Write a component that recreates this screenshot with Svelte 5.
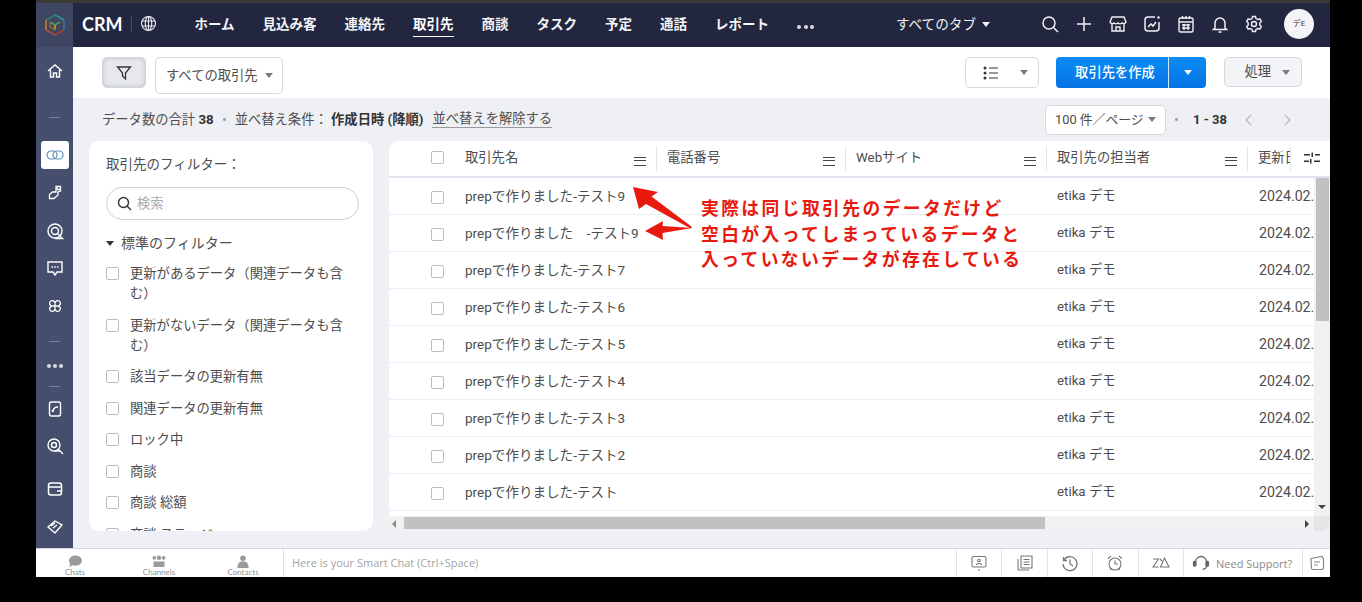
<script>
  const nav = ['ホーム', '見込み客', '連絡先', '取引先', '商談', 'タスク', '予定', '通話', 'レポート']
  const filters = [
    '更新があるデータ（関連データも含む）',
    '更新がないデータ（関連データも含む）',
    '該当データの更新有無',
    '関連データの更新有無',
    'ロック中',
    '商談',
    '商談 総額',
    '商談 ステージ'
  ]
  const rows = [
    'prepで作りました-テスト9',
    'prepで作りました　-テスト9',
    'prepで作りました-テスト7',
    'prepで作りました-テスト6',
    'prepで作りました-テスト5',
    'prepで作りました-テスト4',
    'prepで作りました-テスト3',
    'prepで作りました-テスト2',
    'prepで作りました-テスト'
  ]
</script>

<div class="app">
  <header class="top">
    <div class="logo">
      <svg width="24" height="24" viewBox="0 0 24 24" fill="none" stroke-width="1.6">
        <path d="M12 2 21 7" stroke="#3d8f8a" />
        <path d="M12 2 3 7" stroke="#2f7f6a" />
        <path d="M3 7v10" stroke="#b8862c" />
        <path d="M3 17l9 5" stroke="#b5483c" />
        <path d="M12 22l9-5" stroke="#a33c3c" />
        <path d="M21 17V7" stroke="#3b6fb0" />
        <path d="M7 9l5 3 5-3" stroke="#4b9a58" />
        <path d="M12 12v5" stroke="#c9a22e" />
        <path d="M7 9v5l5 3" stroke="#8c6a2a" />
      </svg>
    </div>
    <div class="brand">CRM</div>
    <span class="brand-sep"></span>
    <svg class="globe" width="17" height="17" viewBox="0 0 17 17" fill="none" stroke="#e8e9ee" stroke-width="1.1">
      <circle cx="8.5" cy="8.5" r="7" />
      <ellipse cx="8.5" cy="8.5" rx="3.2" ry="7" />
      <path d="M8.5 1.5v14M2 6h13M2 11h13" />
    </svg>
    <nav class="nav">
      {#each nav as item}
        <span class="nav-item" class:current={item === '取引先'}>{item}</span>
      {/each}
      <span class="nav-more"><i></i><i></i><i></i></span>
    </nav>
    <div class="top-right">
      <span class="tabs">すべてのタブ<i class="caret light"></i></span>
      <div class="top-icons">
        <svg viewBox="0 0 20 20" fill="none" stroke="#f0f1f5" stroke-width="1.5"><circle cx="9" cy="9" r="6" /><path d="M13.5 13.5 18 18" /></svg>
        <svg viewBox="0 0 20 20" fill="none" stroke="#f0f1f5" stroke-width="1.5"><path d="M10 3v14M3 10h14" /></svg>
        <svg viewBox="0 0 20 20" fill="none" stroke="#f0f1f5" stroke-width="1.4"><path d="M4 3h12l2 5a2.5 2.5 0 0 1-4 1 3 3 0 0 1-4 0 3 3 0 0 1-4 0 2.5 2.5 0 0 1-4-1zM4 10v7h12v-7M8 17v-4h4v4" /></svg>
        <svg viewBox="0 0 20 20" fill="none" stroke="#f0f1f5" stroke-width="1.5"><path d="M13 3H6a3 3 0 0 0-3 3v8a3 3 0 0 0 3 3h8a3 3 0 0 0 3-3V8" /><path d="M6 13l3-3 2 2 3-4" /><circle cx="16.5" cy="3.5" r="1.2" fill="#f0f1f5" stroke="none" /></svg>
        <svg viewBox="0 0 20 20" fill="none" stroke="#f0f1f5" stroke-width="1.4"><rect x="3" y="4" width="14" height="14" rx="1.5" /><path d="M3 8h14M6.5 2v3M10 2v3M13.5 2v3M6 11h8M6 14h8M8 10v6M12 10v6" /></svg>
        <svg viewBox="0 0 20 20" fill="none" stroke="#f0f1f5" stroke-width="1.5"><path d="M5 14V9a5 5 0 0 1 10 0v5l1.5 1.5h-13zM8.5 18h3" /></svg>
        <svg viewBox="0 0 20 20" fill="none" stroke="#f0f1f5" stroke-width="1.4"><path d="M8.5 2.5h3l.5 2 1.800 1 2-.6 1.500 2.600-1.500 1.500v2l1.500 1.500-1.500 2.600-2-.6-1.800 1-.5 2h-3l-.5-2-1.800-1-2 .6-1.500-2.600 1.500-1.500v-2L2.700 7.500l1.500-2.600 2 .6 1.800-1z" /><circle cx="10" cy="10" r="2.500" /></svg>
      </div>
      <span class="avatar">デE</span>
    </div>
  </header>

  <div class="middle">
    <aside class="rail">
      <svg class="r-home" viewBox="0 0 18 18" fill="none" stroke="#fff" stroke-width="1.4"><path d="M2 9l7-6 7 6M4.500 8v7h3v-4h3v4h3V8" /></svg>
      <span class="dash d1"></span>
      <span class="rail-active">
        <svg width="18" height="12" viewBox="0 0 18 12" fill="none" stroke="#5a8fc0" stroke-width="1.200"><rect x="1" y="2" width="10" height="8" rx="4" /><rect x="7" y="2" width="10" height="8" rx="4" /></svg>
      </span>
      <svg class="r-icon" viewBox="0 0 18 18" fill="none" stroke="#fff" stroke-width="1.300"><path d="M10 2.500h4.500v4.500l-2.500 1v3l-4 3.500H3.500v-4l3-2.500h3.500z" /><path d="M11 2.500v3h3.500" /></svg>
      <svg class="r-icon" viewBox="0 0 18 18" fill="none" stroke="#fff" stroke-width="1.400"><circle cx="9" cy="9" r="7" /><circle cx="9" cy="9" r="3.500" /><path d="M11 11l5.500 5.500H9" /></svg>
      <svg class="r-icon" viewBox="0 0 18 18" fill="none" stroke="#fff" stroke-width="1.400"><path d="M2 3h14v10h-5l-2 3-2-3H2z" /><path d="M5.500 8h1.500M8.300 8h1.500M11 8h1.500" /></svg>
      <svg class="r-icon" viewBox="0 0 18 18" fill="none" stroke="#fff" stroke-width="1.300"><path d="M9 6.500a2.700 2.700 0 1 1 2.500 2.500 2.700 2.700 0 1 1-2.500 2.500 2.700 2.700 0 1 1-2.500-2.500A2.700 2.700 0 1 1 9 6.500z" /><path d="M9 6.500v5M6.500 9h5" /></svg>
      <span class="dash d2"></span>
      <span class="rail-dots"><i></i><i></i><i></i></span>
      <span class="dash d3"></span>
      <svg class="r-icon" viewBox="0 0 18 18" fill="none" stroke="#fff" stroke-width="1.400"><rect x="3.500" y="2" width="11" height="14" rx="2" /><path d="M7 12c0-3 2-5 5-5M7 12l-1-2" /></svg>
      <svg class="r-icon" viewBox="0 0 18 18" fill="none" stroke="#fff" stroke-width="1.400"><circle cx="8" cy="8" r="6" /><circle cx="8" cy="8" r="2.500" /><path d="M12.500 12.500 17 17M9 14h5" /></svg>
      <svg class="r-icon wallet" viewBox="0 0 18 18" fill="none" stroke="#fff" stroke-width="1.500"><rect x="2.500" y="3" width="13" height="12" rx="2.500" /><path d="M3 7h12M11 11h4" /></svg>
      <svg class="r-icon" viewBox="0 0 18 18" fill="none" stroke="#fff" stroke-width="1.400"><path d="M2 9l7-6 7 4-7 8zM5 8l4-3M7 10l4-3" /></svg>
    </aside>

    <main class="content">
      <div class="toolbar">
        <button class="filter-btn" aria-label="filter">
          <svg width="18" height="18" viewBox="0 0 18 18" fill="none" stroke="#333" stroke-width="1.300"><path d="M2.500 3h13L10.500 9v6l-3-3V9z" /></svg>
        </button>
        <span class="select view">すべての取引先<i class="caret"></i></span>
        <div class="toolbar-right">
          <span class="select listview">
            <svg width="16" height="14" viewBox="0 0 16 14" fill="#333"><circle cx="2" cy="2" r="1.500" /><circle cx="2" cy="7" r="1.500" /><circle cx="2" cy="12" r="1.500" /><path d="M6 1.500h9v1H6zM6 6.500h9v1H6zM6 11.500h9v1H6z" /></svg>
            <i class="caret"></i>
          </span>
          <div class="create">
            <span class="create-main">取引先を作成</span>
            <span class="create-side"><i class="caret light"></i></span>
          </div>
          <span class="action">処理<i class="caret"></i></span>
        </div>
      </div>

      <div class="summary">
        <span>データ数の合計 <b>38</b></span>
        <span class="dot"></span>
        <span>並べ替え条件： <b>作成日時 (降順)</b></span>
        <span class="clear">並べ替えを解除する</span>
        <div class="pager">
          <span class="select per-page">100 件／ページ<i class="caret"></i></span>
          <span class="dot"></span>
          <b class="range">1 - 38</b>
          <svg width="10" height="12" viewBox="0 0 10 12" fill="none" stroke="#b5b8c0" stroke-width="1.300"><path d="M7 1 2 6l5 5" /></svg>
          <svg width="10" height="12" viewBox="0 0 10 12" fill="none" stroke="#b5b8c0" stroke-width="1.300"><path d="M3 1l5 5-5 5" /></svg>
        </div>
      </div>

      <div class="panes">
        <section class="filter-card">
          <div class="filter-title">取引先のフィルター：</div>
          <div class="search">
            <svg width="15" height="15" viewBox="0 0 15 15" fill="none" stroke="#333" stroke-width="1.400"><circle cx="6.500" cy="6.500" r="5" /><path d="M10 10l4 4" /></svg>
            <span>検索</span>
          </div>
          <div class="filter-group"><i class="caret dark"></i>標準のフィルター</div>
          <ul class="filter-list">
            {#each filters as f}
              <li><span class="check"></span><span class="filter-label">{f}</span></li>
            {/each}
          </ul>
        </section>

        <section class="table-card">
          <div class="thead">
            <div class="th name"><span class="check"></span><span class="th-label">取引先名</span><i class="menu"></i></div>
            <div class="th phone"><span class="th-label">電話番号</span><i class="menu"></i></div>
            <div class="th web"><span class="th-label">Webサイト</span><i class="menu"></i></div>
            <div class="th owner"><span class="th-label">取引先の担当者</span><i class="menu"></i></div>
            <div class="th date"><span class="th-label">更新日時</span></div>
            <div class="th tune">
              <svg width="16" height="12" viewBox="0 0 16 12" fill="#333"><path d="M0 2h6v1.500H0zM11 2h5v1.500h-5zM7.500 .5h1.500v4.500H7.500zM0 8.500h5v1.500H0zM10 8.500h6V10h-6zM6 7h1.500v4.500H6z" /></svg>
            </div>
          </div>
          <div class="tbody">
            <div class="rows">
              {#each rows as r}
                <div class="tr">
                  <div class="td name"><span class="check"></span><span class="cell-name">{r}</span></div>
                  <div class="td phone"></div>
                  <div class="td web"></div>
                  <div class="td owner">etika デモ</div>
                  <div class="td date">2024.02.</div>
                </div>
              {/each}
            </div>
            <div class="vscroll">
              <span class="vthumb"></span>
              <i class="arrow-down"></i>
            </div>
          </div>
          <div class="hscroll">
            <i class="arrow-left"></i>
            <span class="hthumb"></span>
            <i class="arrow-right"></i>
            <span class="corner"></span>
          </div>
        </section>
      </div>
    </main>
  </div>

  <footer class="bottom">
    <div class="messenger">
      <div class="m-item">
        <svg width="16" height="14" viewBox="0 0 16 14" fill="#9a9a9a"><ellipse cx="8.500" cy="6" rx="7" ry="5.500" /><path d="M3 8 2 13l5-3z" /></svg>
        <span>Chats</span>
      </div>
      <div class="m-item">
        <svg width="18" height="14" viewBox="0 0 18 14" fill="#9a9a9a"><circle cx="4" cy="3" r="2" /><circle cx="14" cy="3" r="2" /><circle cx="9" cy="3" r="2.400" /><path d="M3 7h12v5a1 1 0 0 1-1 1H4a1 1 0 0 1-1-1z" /></svg>
        <span>Channels</span>
      </div>
      <div class="m-item">
        <svg width="14" height="14" viewBox="0 0 14 14" fill="#9a9a9a"><circle cx="7" cy="3.500" r="3" /><path d="M1 14c0-5 2-7 6-7s6 2 6 7z" /></svg>
        <span>Contacts</span>
      </div>
    </div>
    <div class="chat-input">Here is your Smart Chat (Ctrl+Space)</div>
    <div class="tool">
      <svg viewBox="0 0 18 18" fill="none" stroke="#777" stroke-width="1.100"><rect x="2" y="2.500" width="14" height="10.500" rx="1.500" /><circle cx="9" cy="6.500" r="1.300" /><path d="M6.500 11c0-2 5-2 5 0M8 16h2" /></svg>
    </div>
    <div class="tool">
      <svg viewBox="0 0 18 18" fill="none" stroke="#777" stroke-width="1.100"><path d="M5 2h11v12H5zM2 5v11h11M7.500 5.500h6M7.500 8h6M7.500 10.500h6" /></svg>
    </div>
    <div class="tool">
      <svg viewBox="0 0 18 18" fill="none" stroke="#777" stroke-width="1.300"><path d="M3 6a7 7 0 1 1-1 4M2.500 3v3.500H6M9 5.500V10l3 2" /></svg>
    </div>
    <div class="tool">
      <svg viewBox="0 0 18 18" fill="none" stroke="#777" stroke-width="1.100"><circle cx="9" cy="10" r="6" /><path d="M9 6.500V10h3M2 4.500 5 2M16 4.500 13 2M4 16l1-1.500M14 16l-1-1.500" /></svg>
    </div>
    <div class="tool">
      <svg viewBox="0 0 18 18" fill="none" stroke="#777" stroke-width="1.100"><path d="M1 5h5.500L1 13h5.500M8.500 13l4-9 4.500 9zM8 5l2 2" /></svg>
    </div>
    <div class="support">
      <svg width="18" height="18" viewBox="0 0 18 18" fill="none" stroke="#666" stroke-width="1.300"><path d="M3.500 8a5.500 5.500 0 0 1 11 0v4a3 3 0 0 1-4 3" /><rect x="1.500" y="7.500" width="2.500" height="4.500" rx="1" fill="#666" /><rect x="14" y="7.500" width="2.500" height="4.500" rx="1" fill="#666" /></svg>
      <span>Need Support?</span>
    </div>
    <div class="tool last">
      <svg viewBox="0 0 18 18" fill="none" stroke="#888" stroke-width="1.200"><path d="M3 4.500 14 2.500l1.500 2.500v9a1.500 1.500 0 0 1-1.500 1.500H5A1.500 1.500 0 0 1 3.500 14zM6 8h6M6 11h4" /></svg>
    </div>
  </footer>

  <svg class="arrows" width="80" height="60" viewBox="0 0 80 60" fill="#e8190f">
    <path d="M2 2 27 7 20.500 11.500 61 42 59.500 43.500 15 19 8 24z" />
    <path d="M14 46 32 36 31.500 41 61 43 31.500 48 32 55z" />
  </svg>
  <div class="note">
    実際は同じ取引先のデータだけど<br />
    空白が入ってしまっているデータと<br />
    入っていないデータが存在している
  </div>
</div>

<style>
  :global(body) {
    margin: 0;
    background: #000;
    overflow: hidden;
  }

  .app {
    position: relative;
    display: flex;
    flex-direction: column;
    width: 1294px;
    height: 577px;
    margin-left: 36px;
    overflow: hidden;
    background: #eef0f5;
    color: #4d4d4d;
    font: 13.300px/20px Roboto, "Noto Sans CJK JP", sans-serif;
  }

  b {
    font-weight: 700;
    color: #333;
  }

  i {
    display: inline-block;
  }

  .caret {
    width: 0;
    height: 0;
    margin-left: 7px;
    vertical-align: 2px;
    border: 4.5px solid transparent;
    border-top: 5px solid #7b7b7b;
    border-bottom: 0;
  }

  .caret.light {
    border-top-color: #f2f3f7;
  }

  .caret.dark {
    margin: 0 7px 0 0;
    border-top-color: #333;
  }

  /* top bar */
  .top {
    display: flex;
    flex: none;
    align-items: center;
    height: 44px;
    border-top: 3px solid #3a3a36;
    background: #22273f;
    color: #f2f3f7;
  }

  .brand,
  .brand-sep,
  .globe,
  .nav,
  .top-right {
    margin-bottom: 3px;
  }

  .logo {
    display: flex;
    align-items: center;
    justify-content: center;
    width: 37px;
    height: 100%;
    background: #3e4662;
  }

  .brand {
    margin-left: 9px;
    font: 700 18px/1 Lato, sans-serif;
    color: #fff;
  }

  .brand-sep {
    width: 1px;
    height: 16px;
    margin-left: 8px;
    margin-right: 8px;
    background: #4a4f68;
  }

  .globe {
    flex: none;
  }

  .nav {
    display: flex;
    align-items: center;
    gap: 28px;
    margin-left: 38px;
  }

  .nav-item {
    padding: 3px 0 2px;
    border-bottom: 1px solid transparent;
    font-size: 13.500px;
    font-weight: 700;
    white-space: nowrap;
  }

  .nav-item.current {
    border-bottom-color: #fff;
    color: #fff;
  }

  .nav-more {
    display: flex;
    gap: 2.500px;
    margin-top: 6px;
  }

  .nav-more i,
  .rail-dots i {
    width: 4px;
    height: 4px;
    border-radius: 50%;
    background: #d9dbe3;
  }

  .top-right {
    display: flex;
    align-items: center;
    margin-left: auto;
    padding-right: 16px;
  }

  .tabs {
    margin-right: 50px;
    font-size: 13.600px;
    white-space: nowrap;
  }

  .tabs .caret {
    margin-left: 6px;
  }

  .top-icons {
    display: flex;
    gap: 14px;
    margin-right: 20px;
  }

  .top-icons svg {
    width: 20px;
    height: 20px;
  }

  .avatar {
    display: flex;
    align-items: center;
    justify-content: center;
    width: 30px;
    height: 30px;
    border-radius: 50%;
    background: #f4f4f6;
    color: #444;
    font-size: 8px;
  }

  /* left rail */
  .middle {
    display: flex;
    flex: 1;
    min-height: 0;
  }

  .rail {
    display: flex;
    flex: none;
    flex-direction: column;
    align-items: center;
    width: 37px;
    padding-top: 15px;
    box-sizing: border-box;
    background: #454e6c;
  }

  .r-home {
    width: 18px;
    height: 18px;
    margin-bottom: 37px;
  }

  .r-icon {
    width: 18px;
    height: 18px;
    margin-top: 19.500px;
  }

  .dash {
    width: 11px;
    height: 1px;
    background: #79809a;
  }

  .rail-active {
    display: flex;
    align-items: center;
    justify-content: center;
    width: 28px;
    height: 28px;
    margin-top: 23px;
    border-radius: 3px;
    background: #fff;
  }

  .rail-active + .r-icon {
    margin-top: 15px;
  }

  .dash.d2 {
    margin-top: 26px;
  }

  .rail-dots {
    display: flex;
    gap: 2px;
    margin-top: 22px;
  }

  .dash.d3 {
    margin-top: 18px;
  }

  .d3 + .r-icon {
    margin-top: 13px;
  }

  .wallet {
    margin-top: 25px;
  }

  /* toolbar */
  .content {
    display: flex;
    flex: 1;
    flex-direction: column;
    min-width: 0;
  }

  .toolbar {
    display: flex;
    flex: none;
    align-items: flex-start;
    height: 51px;
    padding: 10px 28px 0 29px;
    box-sizing: border-box;
    background: #fff;
  }

  .filter-btn {
    display: flex;
    align-items: center;
    justify-content: center;
    width: 44px;
    height: 31px;
    padding: 0;
    border: 1px solid #d3d5da;
    border-radius: 5px;
    background: #e6e8ed;
    box-shadow: inset 0 0 4px #b9bcc4;
  }

  .select {
    display: inline-flex;
    align-items: center;
    box-sizing: border-box;
    border: 1px solid #d6d8de;
    border-radius: 5px;
    background: #fff;
    white-space: nowrap;
  }

  .view {
    width: 128px;
    height: 37px;
    margin-left: 9px;
    padding-left: 10px;
  }

  .toolbar-right {
    display: flex;
    align-items: flex-start;
    margin-left: auto;
  }

  .listview {
    justify-content: space-between;
    width: 74px;
    height: 31px;
    padding: 0 10px 0 17px;
  }

  .create {
    display: flex;
    height: 31px;
    margin-left: 17px;
    border-radius: 4px;
    overflow: hidden;
    background: linear-gradient(#0a8cf5, #0573e3);
    color: #fff;
    font-weight: 500;
  }

  .create-main {
    display: flex;
    align-items: center;
    justify-content: center;
    box-sizing: border-box;
    width: 113px;
    padding-left: 6px;
    border-right: 1px solid #cfe6fb;
  }

  .create-side {
    display: flex;
    flex: 1;
    width: 37px;
    align-items: center;
    justify-content: center;
  }

  .create-side .caret {
    margin: 0;
  }

  .action {
    display: flex;
    align-items: center;
    justify-content: flex-end;
    box-sizing: border-box;
    width: 78px;
    height: 30px;
    margin-left: 18px;
    padding-right: 11px;
    border: 1px solid #d6d8de;
    border-radius: 5px;
    background: #f3f4f7;
  }

  .action .caret {
    margin-left: 11px;
  }

  /* summary row */
  .summary {
    display: flex;
    flex: none;
    align-items: center;
    gap: 8px;
    height: 43px;
    padding: 0 0 0 29px;
    box-sizing: border-box;
    white-space: nowrap;
  }

  .dot {
    width: 3px;
    height: 3px;
    margin: 0 1px;
    border-radius: 50%;
    background: #999;
  }

  .clear {
    margin-left: 1px;
    border-bottom: 1px solid #9a9a9a;
    line-height: 16px;
  }

  .pager {
    display: flex;
    align-items: center;
    margin-left: auto;
    padding-right: 38px;
  }

  .per-page {
    justify-content: space-between;
    width: 121px;
    height: 30px;
    margin-right: 8px;
    padding: 0 9px;
    font-size: 12.800px;
  }

  .per-page .caret {
    margin: 0;
  }

  .range {
    margin: 0 17px 0 14px;
    font-size: 13px;
  }

  .pager svg + svg {
    margin-left: 28px;
  }

  /* panes */
  .panes {
    display: flex;
    flex: 1;
    min-height: 0;
    gap: 16px;
    padding: 0 0 17px 16px;
  }

  .filter-card {
    flex: none;
    box-sizing: border-box;
    width: 284px;
    padding: 13px 14px 0 17px;
    overflow: hidden;
    border-radius: 10px;
    background: #fff;
  }

  .filter-title {
    font-size: 13.500px;
  }

  .search {
    display: flex;
    align-items: center;
    gap: 5px;
    box-sizing: border-box;
    height: 33px;
    margin-top: 13px;
    padding-left: 10px;
    border: 1px solid #ccced3;
    border-radius: 17px;
    color: #aaa;
  }

  .filter-group {
    margin-top: 13px;
    font-size: 14px;
  }

  .filter-list {
    margin: 11px 0 0;
    padding: 0;
    list-style: none;
  }

  .filter-list li {
    display: flex;
    gap: 11px;
    margin-bottom: 11.500px;
  }

  .check {
    flex: none;
    box-sizing: border-box;
    width: 13px;
    height: 13px;
    border: 1.500px solid #bcbcbc;
    border-radius: 2px;
    background: #fff;
  }

  .filter-list .check {
    margin-top: 3px;
  }

  .filter-label {
    max-width: 216px;
  }

  /* table */
  .table-card {
    display: flex;
    flex: 1;
    flex-direction: column;
    min-width: 0;
    overflow: hidden;
    border-radius: 10px 0 0 10px;
    background: #fff;
  }

  .thead {
    display: flex;
    flex: none;
    height: 37px;
    box-sizing: border-box;
    border-bottom: 2px solid #dfe5ee;
  }

  .th {
    position: relative;
    display: flex;
    flex: none;
    align-items: center;
    box-sizing: border-box;
    padding-left: 10px;
    padding-bottom: 2px;
  }

  .th::after {
    content: "";
    position: absolute;
    right: 0;
    top: 5px;
    bottom: 5px;
    width: 1px;
    background: #e3e5ea;
  }

  .th.name,
  .td.name {
    width: 268px;
    padding-left: 42px;
  }

  .phone {
    width: 189px;
  }

  .web,
  .owner {
    width: 201px;
  }

  .date {
    width: 43px;
    overflow: hidden;
    white-space: nowrap;
  }

  .tune {
    width: 39px;
    padding-left: 13px;
    background: #fff;
  }

  .tune::after {
    display: none;
  }

  .th-label {
    flex: none;
  }

  .name .th-label {
    margin-left: 21px;
  }

  .menu {
    position: absolute;
    right: 11px;
    bottom: 10px;
    width: 12px;
    height: 9px;
    border-top: 1.500px solid #444;
    border-bottom: 1.500px solid #444;
    box-sizing: border-box;
  }

  .menu::before {
    content: "";
    display: block;
    margin-top: 1.500px;
    height: 1.500px;
    background: #444;
  }

  .tbody {
    position: relative;
    display: flex;
    flex: 1;
    min-height: 0;
  }

  .rows {
    flex: 1;
    min-width: 0;
    overflow: hidden;
  }

  .tr {
    display: flex;
    height: 37px;
    box-sizing: border-box;
    border-bottom: 1px solid #edeef1;
    white-space: nowrap;
  }

  .td {
    display: flex;
    flex: none;
    align-items: center;
    box-sizing: border-box;
    padding-left: 10px;
  }

  .td .check {
    margin-top: 2px;
  }

  .td.date {
    width: 70px;
    padding-left: 11px;
    font-size: 14.200px;
  }

  .cell-name {
    margin-left: 21px;
    font-size: 13.550px;
  }

  .vscroll {
    position: relative;
    flex: none;
    width: 16px;
    background: #f1f1f1;
  }

  .vthumb {
    position: absolute;
    left: 2px;
    right: 1px;
    top: 0;
    height: 143px;
    background: #c1c1c1;
  }

  .arrow-down {
    position: absolute;
    left: 4px;
    bottom: 7px;
    width: 0;
    height: 0;
    border: 4px solid transparent;
    border-top: 4px solid #444;
    border-bottom: 0;
  }

  .hscroll {
    position: relative;
    flex: none;
    height: 15px;
    background: #f1f1f1;
  }

  .arrow-left,
  .arrow-right {
    position: absolute;
    top: 4px;
    width: 0;
    height: 0;
    border: 4px solid transparent;
  }

  .arrow-left {
    left: 3px;
    border-right: 4px solid #888;
    border-left: 0;
  }

  .arrow-right {
    right: 21px;
    border-left: 4px solid #444;
    border-right: 0;
  }

  .hthumb {
    position: absolute;
    left: 15px;
    top: 1px;
    width: 641px;
    height: 12px;
    background: #c1c1c1;
  }

  .corner {
    position: absolute;
    right: 0;
    top: 0;
    width: 16px;
    height: 15px;
    background: #e6e6e6;
    border-radius: 0 0 8px 0;
  }

  /* bottom bar */
  .bottom {
    display: flex;
    flex: none;
    height: 29px;
    box-sizing: border-box;
    border-top: 1px solid #d5d7dc;
    background: #fff;
    color: #9a9a9a;
  }

  .messenger {
    display: flex;
    flex: none;
    width: 248px;
    padding-left: 18px;
    box-sizing: border-box;
    border-right: 1px solid #dedede;
  }

  .m-item {
    display: flex;
    flex: none;
    flex-direction: column;
    align-items: center;
    width: 84px;
    margin-left: 0;
    padding-top: 6px;
    box-sizing: border-box;
    font: 8px/10px Lato, sans-serif;
    color: #8f8f8f;
  }

  .m-item:first-child {
    width: 42px;
  }

  .m-item:nth-child(2) {
    margin-left: 21px;
  }

  .m-item span {
    margin-top: -1px;
  }

  .chat-input {
    flex: 1;
    padding-left: 8px;
    line-height: 28px;
    font-family: "Open Sans", sans-serif;
    font-size: 11px;
    color: #a3a3a3;
  }

  .tool {
    display: flex;
    align-items: center;
    justify-content: center;
    flex: none;
    box-sizing: border-box;
    width: 45.400px;
    border-left: 1px solid #e2e2e2;
  }

  .tool svg {
    width: 18px;
    height: 18px;
  }

  .tool.last {
    width: 28px;
  }

  .support {
    display: flex;
    align-items: center;
    gap: 6px;
    flex: none;
    box-sizing: border-box;
    width: 119px;
    padding-left: 8px;
    border-left: 1px solid #e2e2e2;
    font: 11px "Open Sans", sans-serif;
    color: #8a8a8a;
    white-space: nowrap;
  }

  /* annotation drawn over the table */
  .arrows {
    position: absolute;
    left: 595px;
    top: 185px;
  }

  .note {
    position: absolute;
    left: 665px;
    top: 195px;
    color: #e8190f;
    font: 700 17.800px/25.500px "Noto Sans CJK JP", sans-serif;
    letter-spacing: 2.400px;
    white-space: nowrap;
  }
</style>
